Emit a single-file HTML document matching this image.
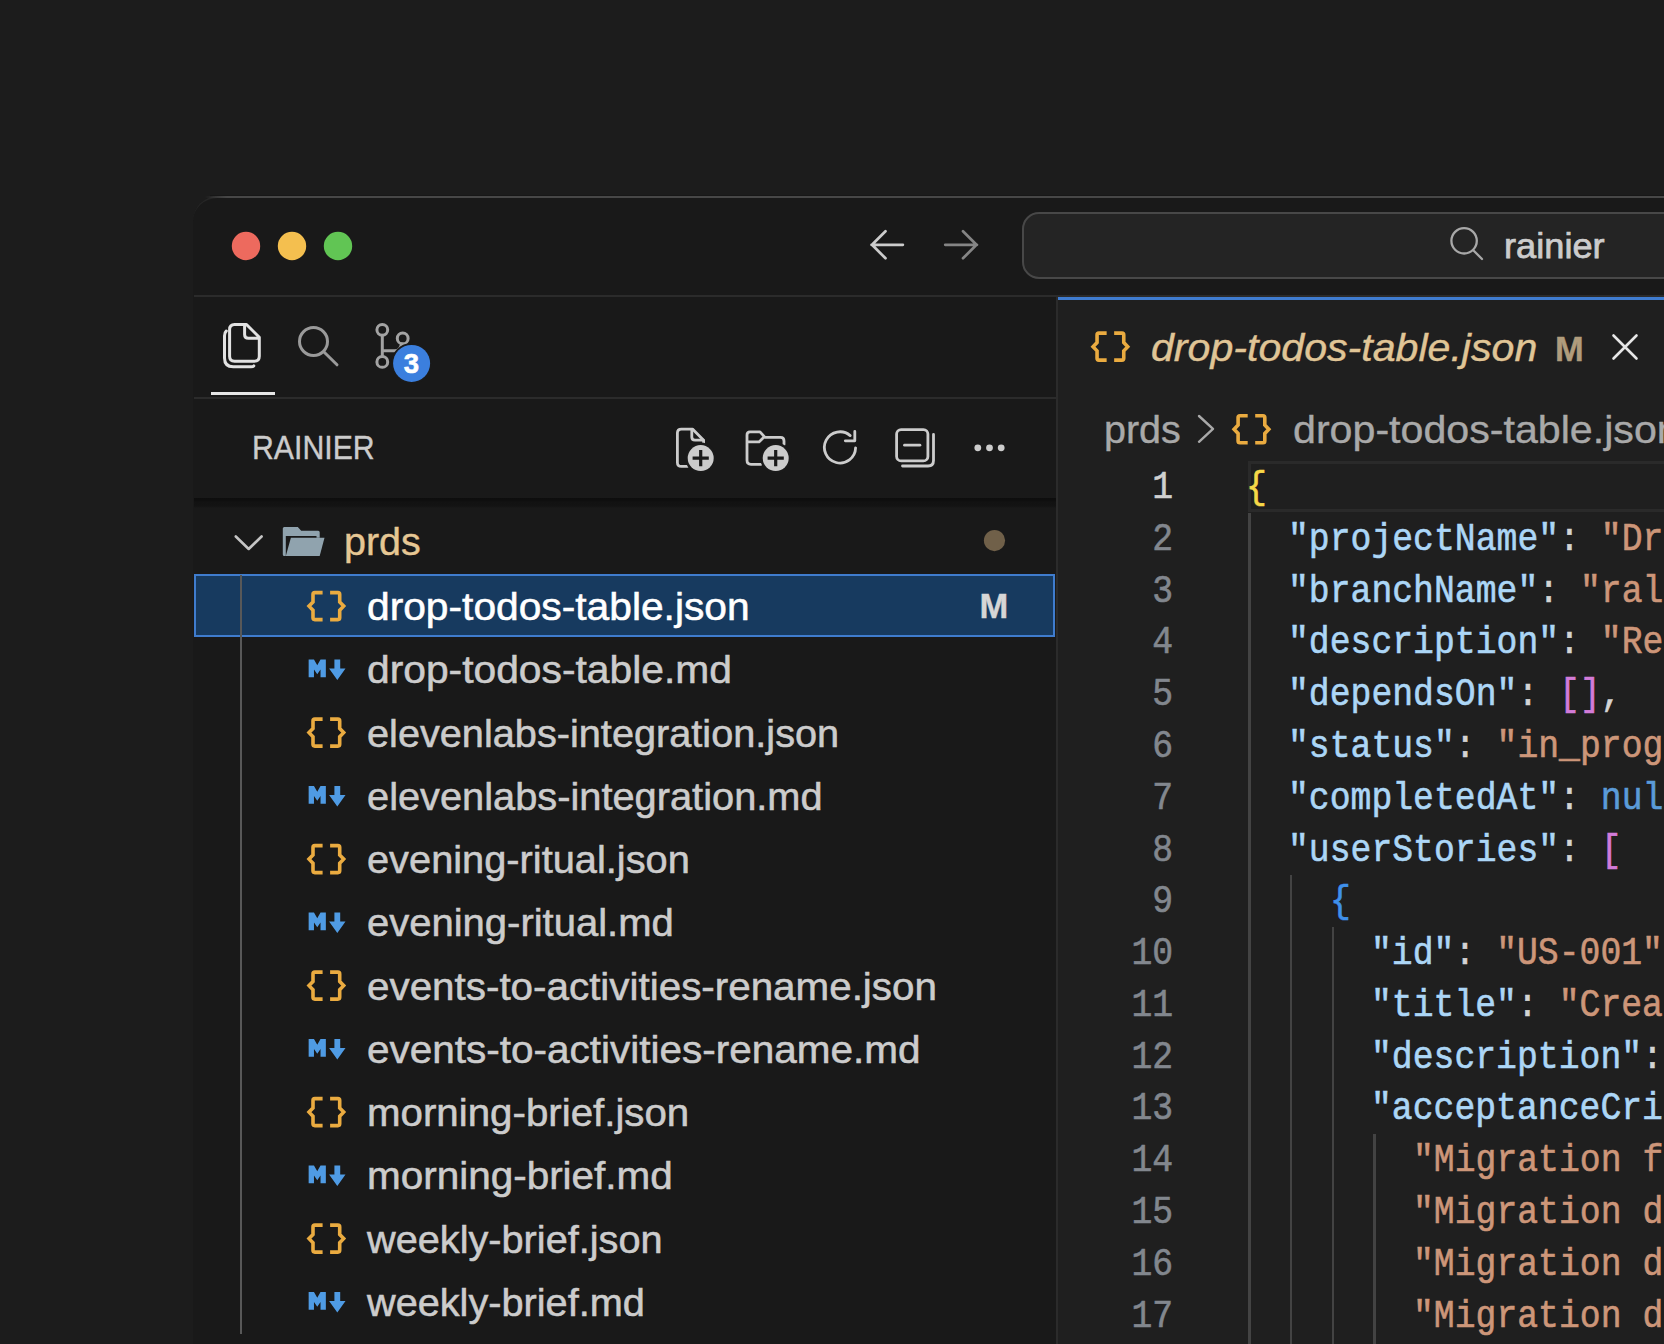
<!DOCTYPE html>
<html><head><meta charset="utf-8">
<style>
*{margin:0;padding:0;box-sizing:border-box}
html,body{width:1664px;height:1344px;overflow:hidden;background:#1c1c1c;font-family:"Liberation Sans",sans-serif}
.a{position:absolute}
.t{position:absolute;white-space:pre;line-height:0;-webkit-text-stroke:0.4px currentColor}
</style></head><body>
<div class="a" style="left:193.4px;top:195.5px;width:1600px;height:1300px;background:#191919;border-top-left-radius:25px;border-top:2px solid #262626"></div>
<div class="a" style="left:205px;top:195.5px;width:1459px;height:2px;background:linear-gradient(90deg,rgba(72,72,72,0),#474747 22px)"></div>
<div class="a" style="left:210px;top:194.5px;width:1454px;height:1px;background:#171717"></div>
<div class="a" style="left:194px;top:295px;width:1470px;height:2px;background:#2b2b2b"></div>
<div class="a" style="left:1022px;top:212px;width:700px;height:67px;border:2.5px solid #484848;border-radius:17px;background:#242424"></div>
<div class="a" style="left:194px;top:396.5px;width:862px;height:2px;background:#2b2b2b"></div>
<div class="a" style="left:211px;top:391.5px;width:64px;height:3px;background:#e6e6e6"></div>
<div class="a" style="left:194px;top:498px;width:862px;height:10px;background:linear-gradient(180deg,#0d0d0d 0px,#0f0f0f 2.5px,#121212 4px,#131313 8px,rgba(25,25,25,0) 10px)"></div>
<div class="a" style="left:194px;top:573.7px;width:861px;height:63.3px;background:#173a5f;border:2px solid #3f7cce"></div>
<div class="a" style="left:240px;top:574.5px;width:2px;height:759px;background:#585858"></div>
<div class="a" style="left:1056px;top:297px;width:2px;height:1047px;background:#2b2b2b"></div>
<div class="a" style="left:1058px;top:297px;width:606px;height:1047px;background:#1f1f1f"></div>
<div class="a" style="left:1058px;top:297px;width:606px;height:3px;background:#3f7cd0"></div>
<div class="a" style="left:1247.8px;top:460.8px;width:500px;height:51.7px;border:3px solid #2a2a2a"></div>
<div class="a" style="left:1248.20px;top:512.58px;width:2.6px;height:831.42px;background:#434343"></div>
<div class="a" style="left:1289.90px;top:875.04px;width:2.6px;height:468.96px;background:#434343"></div>
<div class="a" style="left:1331.60px;top:926.82px;width:2.6px;height:417.18px;background:#434343"></div>
<div class="a" style="left:1373.30px;top:1133.94px;width:2.6px;height:210.06px;background:#434343"></div>

<div class="t" style="left:1503.50px;top:246.30px;font-size:35.5px;font-family:'Liberation Sans',sans-serif;color:#cccccc;transform:scaleX(1.0200);transform-origin:0 0;-webkit-text-stroke:0.75px currentColor;">rainier</div>
<div class="t" style="left:252.30px;top:448.39px;font-size:33.5px;font-family:'Liberation Sans',sans-serif;color:#cccccc;transform:scaleX(0.9025);transform-origin:0 0;">RAINIER</div>
<div class="t" style="left:344.00px;top:541.11px;font-size:39.5px;font-family:'Liberation Sans',sans-serif;color:#e6c794;">prds</div>
<div class="t" style="left:979.50px;top:606.25px;font-size:34.5px;font-family:'Liberation Sans',sans-serif;color:#d6d6d6;font-weight:bold;">M</div>
<div class="t" style="left:1151.00px;top:347.41px;font-size:39.5px;font-family:'Liberation Sans',sans-serif;color:#e0c596;transform:scaleX(1.0410);transform-origin:0 0;font-style:italic;">drop-todos-table.json</div>
<div class="t" style="left:1555.00px;top:348.65px;font-size:34.5px;font-family:'Liberation Sans',sans-serif;color:#b09c7c;font-weight:bold;">M</div>
<div class="t" style="left:1104.00px;top:429.11px;font-size:39.5px;font-family:'Liberation Sans',sans-serif;color:#a9a9a9;">prds</div>
<div class="t" style="left:1293.00px;top:429.11px;font-size:39.5px;font-family:'Liberation Sans',sans-serif;color:#a9a9a9;transform:scaleX(1.0420);transform-origin:0 0;">drop-todos-table.json</div>

<div class="t" style="left:367.00px;top:606.11px;font-size:39.5px;font-family:'Liberation Sans',sans-serif;color:#ffffff;transform:scaleX(1.0311);transform-origin:0 0;-webkit-text-stroke:0.55px currentColor;">drop-todos-table.json</div>
<div class="t" style="left:367.00px;top:669.36px;font-size:39.5px;font-family:'Liberation Sans',sans-serif;color:#cccccc;transform:scaleX(1.0321);transform-origin:0 0;-webkit-text-stroke:0.55px currentColor;">drop-todos-table.md</div>
<div class="t" style="left:367.00px;top:732.61px;font-size:39.5px;font-family:'Liberation Sans',sans-serif;color:#cccccc;transform:scaleX(1.0047);transform-origin:0 0;-webkit-text-stroke:0.55px currentColor;">elevenlabs-integration.json</div>
<div class="t" style="left:367.00px;top:795.86px;font-size:39.5px;font-family:'Liberation Sans',sans-serif;color:#cccccc;transform:scaleX(1.0072);transform-origin:0 0;-webkit-text-stroke:0.55px currentColor;">elevenlabs-integration.md</div>
<div class="t" style="left:367.00px;top:859.11px;font-size:39.5px;font-family:'Liberation Sans',sans-serif;color:#cccccc;transform:scaleX(1.0070);transform-origin:0 0;-webkit-text-stroke:0.55px currentColor;">evening-ritual.json</div>
<div class="t" style="left:367.00px;top:922.36px;font-size:39.5px;font-family:'Liberation Sans',sans-serif;color:#cccccc;transform:scaleX(1.0125);transform-origin:0 0;-webkit-text-stroke:0.55px currentColor;">evening-ritual.md</div>
<div class="t" style="left:367.00px;top:985.61px;font-size:39.5px;font-family:'Liberation Sans',sans-serif;color:#cccccc;transform:scaleX(1.0221);transform-origin:0 0;-webkit-text-stroke:0.55px currentColor;">events-to-activities-rename.json</div>
<div class="t" style="left:367.00px;top:1048.86px;font-size:39.5px;font-family:'Liberation Sans',sans-serif;color:#cccccc;transform:scaleX(1.0251);transform-origin:0 0;-webkit-text-stroke:0.55px currentColor;">events-to-activities-rename.md</div>
<div class="t" style="left:367.00px;top:1112.11px;font-size:39.5px;font-family:'Liberation Sans',sans-serif;color:#cccccc;transform:scaleX(1.0194);transform-origin:0 0;-webkit-text-stroke:0.55px currentColor;">morning-brief.json</div>
<div class="t" style="left:367.00px;top:1175.36px;font-size:39.5px;font-family:'Liberation Sans',sans-serif;color:#cccccc;transform:scaleX(1.0243);transform-origin:0 0;-webkit-text-stroke:0.55px currentColor;">morning-brief.md</div>
<div class="t" style="left:367.00px;top:1238.61px;font-size:39.5px;font-family:'Liberation Sans',sans-serif;color:#cccccc;transform:scaleX(1.0049);transform-origin:0 0;-webkit-text-stroke:0.55px currentColor;">weekly-brief.json</div>
<div class="t" style="left:367.00px;top:1301.86px;font-size:39.5px;font-family:'Liberation Sans',sans-serif;color:#cccccc;transform:scaleX(1.0044);transform-origin:0 0;-webkit-text-stroke:0.55px currentColor;">weekly-brief.md</div>

<div class="t" style="left:1246.30px;top:488.04px;font-size:38.5px;font-family:'Liberation Mono',monospace;color:#d4d4d4;transform:scaleX(0.9026);transform-origin:0 0;-webkit-text-stroke:0.6px currentColor;"><span style="color:#f7d848">{</span></div>
<div class="t" style="left:1150.10px;top:488.04px;font-size:38.5px;font-family:'Liberation Mono',monospace;color:#d0d0d0;transform:scaleX(0.9026);transform-origin:100% 0;width:23.10px;-webkit-text-stroke:0.6px currentColor;">1</div>
<div class="t" style="left:1288.00px;top:539.82px;font-size:38.5px;font-family:'Liberation Mono',monospace;color:#d4d4d4;transform:scaleX(0.9026);transform-origin:0 0;-webkit-text-stroke:0.6px currentColor;"><span style="color:#acd6f6">"projectName"</span><span style="color:#d4d4d4">: </span><span style="color:#cd9679">"Drop todos table"</span><span style="color:#d4d4d4">,</span></div>
<div class="t" style="left:1150.10px;top:539.82px;font-size:38.5px;font-family:'Liberation Mono',monospace;color:#82878e;transform:scaleX(0.9026);transform-origin:100% 0;width:23.10px;-webkit-text-stroke:0.6px currentColor;">2</div>
<div class="t" style="left:1288.00px;top:591.60px;font-size:38.5px;font-family:'Liberation Mono',monospace;color:#d4d4d4;transform:scaleX(0.9026);transform-origin:0 0;-webkit-text-stroke:0.6px currentColor;"><span style="color:#acd6f6">"branchName"</span><span style="color:#d4d4d4">: </span><span style="color:#cd9679">"ralph/drop-todos-table"</span><span style="color:#d4d4d4">,</span></div>
<div class="t" style="left:1150.10px;top:591.60px;font-size:38.5px;font-family:'Liberation Mono',monospace;color:#82878e;transform:scaleX(0.9026);transform-origin:100% 0;width:23.10px;-webkit-text-stroke:0.6px currentColor;">3</div>
<div class="t" style="left:1288.00px;top:643.38px;font-size:38.5px;font-family:'Liberation Mono',monospace;color:#d4d4d4;transform:scaleX(0.9026);transform-origin:0 0;-webkit-text-stroke:0.6px currentColor;"><span style="color:#acd6f6">"description"</span><span style="color:#d4d4d4">: </span><span style="color:#cd9679">"Remove the legacy todos table"</span><span style="color:#d4d4d4">,</span></div>
<div class="t" style="left:1150.10px;top:643.38px;font-size:38.5px;font-family:'Liberation Mono',monospace;color:#82878e;transform:scaleX(0.9026);transform-origin:100% 0;width:23.10px;-webkit-text-stroke:0.6px currentColor;">4</div>
<div class="t" style="left:1288.00px;top:695.16px;font-size:38.5px;font-family:'Liberation Mono',monospace;color:#d4d4d4;transform:scaleX(0.9026);transform-origin:0 0;-webkit-text-stroke:0.6px currentColor;"><span style="color:#acd6f6">"dependsOn"</span><span style="color:#d4d4d4">: </span><span style="color:#d27bd8">[]</span><span style="color:#d4d4d4">,</span></div>
<div class="t" style="left:1150.10px;top:695.16px;font-size:38.5px;font-family:'Liberation Mono',monospace;color:#82878e;transform:scaleX(0.9026);transform-origin:100% 0;width:23.10px;-webkit-text-stroke:0.6px currentColor;">5</div>
<div class="t" style="left:1288.00px;top:746.94px;font-size:38.5px;font-family:'Liberation Mono',monospace;color:#d4d4d4;transform:scaleX(0.9026);transform-origin:0 0;-webkit-text-stroke:0.6px currentColor;"><span style="color:#acd6f6">"status"</span><span style="color:#d4d4d4">: </span><span style="color:#cd9679">"in_progress"</span><span style="color:#d4d4d4">,</span></div>
<div class="t" style="left:1150.10px;top:746.94px;font-size:38.5px;font-family:'Liberation Mono',monospace;color:#82878e;transform:scaleX(0.9026);transform-origin:100% 0;width:23.10px;-webkit-text-stroke:0.6px currentColor;">6</div>
<div class="t" style="left:1288.00px;top:798.72px;font-size:38.5px;font-family:'Liberation Mono',monospace;color:#d4d4d4;transform:scaleX(0.9026);transform-origin:0 0;-webkit-text-stroke:0.6px currentColor;"><span style="color:#acd6f6">"completedAt"</span><span style="color:#d4d4d4">: </span><span style="color:#5b9bd8">null</span><span style="color:#d4d4d4">,</span></div>
<div class="t" style="left:1150.10px;top:798.72px;font-size:38.5px;font-family:'Liberation Mono',monospace;color:#82878e;transform:scaleX(0.9026);transform-origin:100% 0;width:23.10px;-webkit-text-stroke:0.6px currentColor;">7</div>
<div class="t" style="left:1288.00px;top:850.50px;font-size:38.5px;font-family:'Liberation Mono',monospace;color:#d4d4d4;transform:scaleX(0.9026);transform-origin:0 0;-webkit-text-stroke:0.6px currentColor;"><span style="color:#acd6f6">"userStories"</span><span style="color:#d4d4d4">: </span><span style="color:#d27bd8">[</span></div>
<div class="t" style="left:1150.10px;top:850.50px;font-size:38.5px;font-family:'Liberation Mono',monospace;color:#82878e;transform:scaleX(0.9026);transform-origin:100% 0;width:23.10px;-webkit-text-stroke:0.6px currentColor;">8</div>
<div class="t" style="left:1329.70px;top:902.28px;font-size:38.5px;font-family:'Liberation Mono',monospace;color:#d4d4d4;transform:scaleX(0.9026);transform-origin:0 0;-webkit-text-stroke:0.6px currentColor;"><span style="color:#3f90ea">{</span></div>
<div class="t" style="left:1150.10px;top:902.28px;font-size:38.5px;font-family:'Liberation Mono',monospace;color:#82878e;transform:scaleX(0.9026);transform-origin:100% 0;width:23.10px;-webkit-text-stroke:0.6px currentColor;">9</div>
<div class="t" style="left:1371.40px;top:954.06px;font-size:38.5px;font-family:'Liberation Mono',monospace;color:#d4d4d4;transform:scaleX(0.9026);transform-origin:0 0;-webkit-text-stroke:0.6px currentColor;"><span style="color:#acd6f6">"id"</span><span style="color:#d4d4d4">: </span><span style="color:#cd9679">"US-001"</span><span style="color:#d4d4d4">,</span></div>
<div class="t" style="left:1127.00px;top:954.06px;font-size:38.5px;font-family:'Liberation Mono',monospace;color:#82878e;transform:scaleX(0.9026);transform-origin:100% 0;width:46.20px;-webkit-text-stroke:0.6px currentColor;">10</div>
<div class="t" style="left:1371.40px;top:1005.84px;font-size:38.5px;font-family:'Liberation Mono',monospace;color:#d4d4d4;transform:scaleX(0.9026);transform-origin:0 0;-webkit-text-stroke:0.6px currentColor;"><span style="color:#acd6f6">"title"</span><span style="color:#d4d4d4">: </span><span style="color:#cd9679">"Create migration"</span><span style="color:#d4d4d4">,</span></div>
<div class="t" style="left:1127.00px;top:1005.84px;font-size:38.5px;font-family:'Liberation Mono',monospace;color:#82878e;transform:scaleX(0.9026);transform-origin:100% 0;width:46.20px;-webkit-text-stroke:0.6px currentColor;">11</div>
<div class="t" style="left:1371.40px;top:1057.62px;font-size:38.5px;font-family:'Liberation Mono',monospace;color:#d4d4d4;transform:scaleX(0.9026);transform-origin:0 0;-webkit-text-stroke:0.6px currentColor;"><span style="color:#acd6f6">"description"</span><span style="color:#d4d4d4">: </span><span style="color:#cd9679">"As a developer"</span><span style="color:#d4d4d4">,</span></div>
<div class="t" style="left:1127.00px;top:1057.62px;font-size:38.5px;font-family:'Liberation Mono',monospace;color:#82878e;transform:scaleX(0.9026);transform-origin:100% 0;width:46.20px;-webkit-text-stroke:0.6px currentColor;">12</div>
<div class="t" style="left:1371.40px;top:1109.40px;font-size:38.5px;font-family:'Liberation Mono',monospace;color:#d4d4d4;transform:scaleX(0.9026);transform-origin:0 0;-webkit-text-stroke:0.6px currentColor;"><span style="color:#acd6f6">"acceptanceCriteria"</span><span style="color:#d4d4d4">: </span><span style="color:#f7d848">[</span></div>
<div class="t" style="left:1127.00px;top:1109.40px;font-size:38.5px;font-family:'Liberation Mono',monospace;color:#82878e;transform:scaleX(0.9026);transform-origin:100% 0;width:46.20px;-webkit-text-stroke:0.6px currentColor;">13</div>
<div class="t" style="left:1413.10px;top:1161.18px;font-size:38.5px;font-family:'Liberation Mono',monospace;color:#d4d4d4;transform:scaleX(0.9026);transform-origin:0 0;-webkit-text-stroke:0.6px currentColor;"><span style="color:#cd9679">"Migration file created"</span></div>
<div class="t" style="left:1127.00px;top:1161.18px;font-size:38.5px;font-family:'Liberation Mono',monospace;color:#82878e;transform:scaleX(0.9026);transform-origin:100% 0;width:46.20px;-webkit-text-stroke:0.6px currentColor;">14</div>
<div class="t" style="left:1413.10px;top:1212.96px;font-size:38.5px;font-family:'Liberation Mono',monospace;color:#d4d4d4;transform:scaleX(0.9026);transform-origin:0 0;-webkit-text-stroke:0.6px currentColor;"><span style="color:#cd9679">"Migration drops todos table"</span></div>
<div class="t" style="left:1127.00px;top:1212.96px;font-size:38.5px;font-family:'Liberation Mono',monospace;color:#82878e;transform:scaleX(0.9026);transform-origin:100% 0;width:46.20px;-webkit-text-stroke:0.6px currentColor;">15</div>
<div class="t" style="left:1413.10px;top:1264.74px;font-size:38.5px;font-family:'Liberation Mono',monospace;color:#d4d4d4;transform:scaleX(0.9026);transform-origin:0 0;-webkit-text-stroke:0.6px currentColor;"><span style="color:#cd9679">"Migration drops related indexes"</span></div>
<div class="t" style="left:1127.00px;top:1264.74px;font-size:38.5px;font-family:'Liberation Mono',monospace;color:#82878e;transform:scaleX(0.9026);transform-origin:100% 0;width:46.20px;-webkit-text-stroke:0.6px currentColor;">16</div>
<div class="t" style="left:1413.10px;top:1316.52px;font-size:38.5px;font-family:'Liberation Mono',monospace;color:#d4d4d4;transform:scaleX(0.9026);transform-origin:0 0;-webkit-text-stroke:0.6px currentColor;"><span style="color:#cd9679">"Migration down recreates table"</span></div>
<div class="t" style="left:1127.00px;top:1316.52px;font-size:38.5px;font-family:'Liberation Mono',monospace;color:#82878e;transform:scaleX(0.9026);transform-origin:100% 0;width:46.20px;-webkit-text-stroke:0.6px currentColor;">17</div>

<svg class="a" style="left:0;top:0" width="1664" height="1344" viewBox="0 0 1664 1344">
 <circle cx="246" cy="246" r="14.2" fill="#ed6a5e"/>
 <circle cx="292" cy="246" r="14.2" fill="#f4bf4f"/>
 <circle cx="338" cy="246" r="14.2" fill="#61c554"/>
 <g fill="none" stroke-linecap="round" stroke-linejoin="round">
  <path d="M902.9 244.8H871.5M885.5 231.3L872 244.8L885.5 258.3" stroke="#cccccc" stroke-width="2.7"/>
  <path d="M945.2 244.8H977M963 231.3L976.5 244.8L963 258.3" stroke="#858585" stroke-width="2.7"/>
  <circle cx="1464.1" cy="240.8" r="12.7" stroke="#a8a8a8" stroke-width="2.3"/>
  <path d="M1473.5 250.5L1482 259" stroke="#a8a8a8" stroke-width="2.3"/>
  <path d="M234.6 324.5H246.5L259.3 337.3V356.2Q259.3 361.2 254.3 361.2H234.6Q229.6 361.2 229.6 356.2V329.5Q229.6 324.5 234.6 324.5Z M244.6 325V334.5Q244.6 338.3 248.4 338.3H259 M226.3 331Q224.5 332.5 224.5 336V358Q224.5 366.8 233.3 366.8H251Q253 366.8 253.8 365.9" stroke="#e2e2e2" stroke-width="3"/>
  <circle cx="313.5" cy="341.5" r="14" stroke="#9a9a9a" stroke-width="3"/>
  <path d="M324 352L337 364.8" stroke="#9a9a9a" stroke-width="3"/>
  <circle cx="382.3" cy="329.8" r="5.4" stroke="#a3a3a3" stroke-width="3"/>
  <circle cx="402.7" cy="338.4" r="5.4" stroke="#a3a3a3" stroke-width="3"/>
  <circle cx="382.3" cy="361.9" r="5.4" stroke="#a3a3a3" stroke-width="3"/>
  <path d="M382.3 335.2V356.5M382.3 350.7H395Q400 350.7 401.5 344" stroke="#a3a3a3" stroke-width="3"/>
 </g>
 <circle cx="411.6" cy="363.4" r="20.5" fill="#1a1a1a"/>
 <circle cx="411.6" cy="363.4" r="18.5" fill="#3b7fde"/>
 <text x="411.3" y="373.0" font-family="Liberation Sans" font-weight="bold" font-size="27.5" fill="#ffffff" stroke="#ffffff" stroke-width="0.6" text-anchor="middle">3</text>
 <g fill="none" stroke="#cccccc" stroke-width="2.8" stroke-linecap="round" stroke-linejoin="round">
  <path d="M687.5 466.4H681.4Q677.4 466.4 677.4 462.4V433.1Q677.4 429.1 681.4 429.1H692.5L703.6 440.2V444"/>
  <path d="M691.8 429.5V437Q691.8 440.2 695 440.2H703.2"/>
  <path d="M761 464.3H751Q747 464.3 747 460.3V435Q747 431.9 750 431.9H760L765 437.4H780.5Q784 437.4 784 441V444.5"/>
  <path d="M747.5 441.9H759L763.5 437.6"/>
  <path d="M850.2 435.6A15.6 15.6 0 1 0 855.6 447.8"/>
  <path d="M854.8 431.4V440.8H845.3"/>
  <rect x="896.6" y="429.6" width="31.3" height="31.3" rx="4.5"/>
  <path d="M904.5 445.2H919.9"/>
  <path d="M933.5 434.5V460.5Q933.5 466 928 466H902.5"/>
 </g>
 <circle cx="700.7" cy="458.1" r="15.5" fill="#1a1a1a"/>
 <circle cx="700.7" cy="458.1" r="13" fill="#cccccc"/>
 <circle cx="775.7" cy="458.1" r="15.5" fill="#1a1a1a"/>
 <circle cx="775.7" cy="458.1" r="13" fill="#cccccc"/>
 <path d="M692.6 458.1H708.8M700.7 450V466.2M767.6 458.1H783.8M775.7 450V466.2" stroke="#1a1a1a" stroke-width="3.2"/>
 <circle cx="977.8" cy="447.8" r="3.4" fill="#cccccc"/>
 <circle cx="989.5" cy="447.8" r="3.4" fill="#cccccc"/>
 <circle cx="1001.2" cy="447.8" r="3.4" fill="#cccccc"/>
 <path d="M235.8 536.5L248.7 549L261.6 536.5" fill="none" stroke="#c5c5c5" stroke-width="2.6" stroke-linecap="round" stroke-linejoin="round"/>
 <path d="M282.8 528.5Q282.8 527 284.3 527H297.8L301.2 530.8H318.2Q319.7 530.8 319.7 532.3V537.7H316.5V535.9H285.8V556H284.3Q282.8 556 282.8 554.5Z" fill="#90a3ae"/>
 <path d="M290.9 537.7H324.5L319.7 556H285.8Z" fill="#90a3ae"/>
 <circle cx="994.5" cy="540.6" r="10.6" fill="#706049"/>
 <path d="M322.60 592.62H314.80Q313.00 592.62 313.00 594.42V601.92L309.00 606.12L313.00 610.33V617.83Q313.00 619.62 314.80 619.62H322.60 M330.10 592.62H337.90Q339.70 592.62 339.70 594.42V601.92L343.70 606.12L339.70 610.33V617.83Q339.70 619.62 337.90 619.62H330.10" fill="none" stroke="#eaab40" stroke-width="3.6" stroke-linejoin="miter" stroke-miterlimit="3"/>
<path d="M308.65 659.58H313.97L317.25 665.27L320.52 659.58H325.85V677.17H320.52V669.38L317.25 674.27L313.97 669.38V677.17H308.65Z M334.4 659.58H340.2V668.58H345.5L337.3 679.98L329.1 668.58H334.4Z" fill="#4f9be4"/>
<path d="M322.60 719.12H314.80Q313.00 719.12 313.00 720.92V728.42L309.00 732.62L313.00 736.83V744.33Q313.00 746.12 314.80 746.12H322.60 M330.10 719.12H337.90Q339.70 719.12 339.70 720.92V728.42L343.70 732.62L339.70 736.83V744.33Q339.70 746.12 337.90 746.12H330.10" fill="none" stroke="#eaab40" stroke-width="3.6" stroke-linejoin="miter" stroke-miterlimit="3"/>
<path d="M308.65 786.08H313.97L317.25 791.77L320.52 786.08H325.85V803.67H320.52V795.88L317.25 800.77L313.97 795.88V803.67H308.65Z M334.4 786.08H340.2V795.08H345.5L337.3 806.48L329.1 795.08H334.4Z" fill="#4f9be4"/>
<path d="M322.60 845.62H314.80Q313.00 845.62 313.00 847.42V854.92L309.00 859.12L313.00 863.33V870.83Q313.00 872.62 314.80 872.62H322.60 M330.10 845.62H337.90Q339.70 845.62 339.70 847.42V854.92L343.70 859.12L339.70 863.33V870.83Q339.70 872.62 337.90 872.62H330.10" fill="none" stroke="#eaab40" stroke-width="3.6" stroke-linejoin="miter" stroke-miterlimit="3"/>
<path d="M308.65 912.58H313.97L317.25 918.27L320.52 912.58H325.85V930.17H320.52V922.38L317.25 927.27L313.97 922.38V930.17H308.65Z M334.4 912.58H340.2V921.58H345.5L337.3 932.98L329.1 921.58H334.4Z" fill="#4f9be4"/>
<path d="M322.60 972.12H314.80Q313.00 972.12 313.00 973.92V981.42L309.00 985.62L313.00 989.83V997.33Q313.00 999.12 314.80 999.12H322.60 M330.10 972.12H337.90Q339.70 972.12 339.70 973.92V981.42L343.70 985.62L339.70 989.83V997.33Q339.70 999.12 337.90 999.12H330.10" fill="none" stroke="#eaab40" stroke-width="3.6" stroke-linejoin="miter" stroke-miterlimit="3"/>
<path d="M308.65 1039.08H313.97L317.25 1044.78L320.52 1039.08H325.85V1056.67H320.52V1048.88L317.25 1053.78L313.97 1048.88V1056.67H308.65Z M334.4 1039.08H340.2V1048.08H345.5L337.3 1059.47L329.1 1048.08H334.4Z" fill="#4f9be4"/>
<path d="M322.60 1098.62H314.80Q313.00 1098.62 313.00 1100.42V1107.92L309.00 1112.12L313.00 1116.33V1123.83Q313.00 1125.62 314.80 1125.62H322.60 M330.10 1098.62H337.90Q339.70 1098.62 339.70 1100.42V1107.92L343.70 1112.12L339.70 1116.33V1123.83Q339.70 1125.62 337.90 1125.62H330.10" fill="none" stroke="#eaab40" stroke-width="3.6" stroke-linejoin="miter" stroke-miterlimit="3"/>
<path d="M308.65 1165.58H313.97L317.25 1171.28L320.52 1165.58H325.85V1183.17H320.52V1175.38L317.25 1180.28L313.97 1175.38V1183.17H308.65Z M334.4 1165.58H340.2V1174.58H345.5L337.3 1185.97L329.1 1174.58H334.4Z" fill="#4f9be4"/>
<path d="M322.60 1225.12H314.80Q313.00 1225.12 313.00 1226.92V1234.42L309.00 1238.62L313.00 1242.83V1250.33Q313.00 1252.12 314.80 1252.12H322.60 M330.10 1225.12H337.90Q339.70 1225.12 339.70 1226.92V1234.42L343.70 1238.62L339.70 1242.83V1250.33Q339.70 1252.12 337.90 1252.12H330.10" fill="none" stroke="#eaab40" stroke-width="3.6" stroke-linejoin="miter" stroke-miterlimit="3"/>
<path d="M308.65 1292.08H313.97L317.25 1297.78L320.52 1292.08H325.85V1309.67H320.52V1301.88L317.25 1306.78L313.97 1301.88V1309.67H308.65Z M334.4 1292.08H340.2V1301.08H345.5L337.3 1312.47L329.1 1301.08H334.4Z" fill="#4f9be4"/>

 <path d="M1106.65 333.15H1098.85Q1097.05 333.15 1097.05 334.95V342.45L1093.05 346.65L1097.05 350.85V358.35Q1097.05 360.15 1098.85 360.15H1106.65 M1114.15 333.15H1121.95Q1123.75 333.15 1123.75 334.95V342.45L1127.75 346.65L1123.75 350.85V358.35Q1123.75 360.15 1121.95 360.15H1114.15" fill="none" stroke="#eaab40" stroke-width="3.6" stroke-linejoin="miter" stroke-miterlimit="3"/>

 <path d="M1613.5 335.5L1636.5 358.5M1636.5 335.5L1613.5 358.5" stroke="#e6e6e6" stroke-width="2.6" stroke-linecap="round"/>
 <path d="M1199 416L1213 428.9L1199 441.8" fill="none" stroke="#a9a9a9" stroke-width="2.4" stroke-linecap="round" stroke-linejoin="round"/>
 <path d="M1247.70 415.80H1239.90Q1238.10 415.80 1238.10 417.60V425.10L1234.10 429.30L1238.10 433.50V441.00Q1238.10 442.80 1239.90 442.80H1247.70 M1255.20 415.80H1263.00Q1264.80 415.80 1264.80 417.60V425.10L1268.80 429.30L1264.80 433.50V441.00Q1264.80 442.80 1263.00 442.80H1255.20" fill="none" stroke="#eaab40" stroke-width="3.6" stroke-linejoin="miter" stroke-miterlimit="3"/>

</svg>
</body></html>
